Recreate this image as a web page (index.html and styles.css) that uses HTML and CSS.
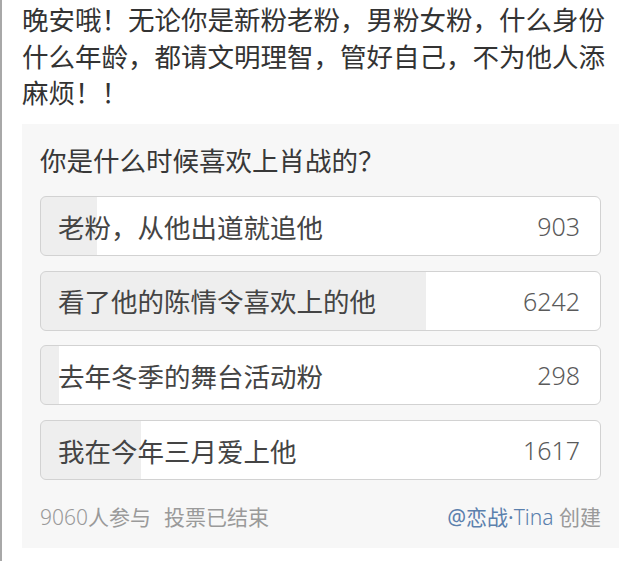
FILE: index.html
```html
<!DOCTYPE html>
<html lang="zh-CN">

<head>
    <meta charset="UTF-8">
    <meta name="viewport" content="width=device-width, initial-scale=1.0">
    <title>投票</title>
    <link rel="stylesheet" href="styles.css">
</head>

<body>
    <div class="page">
        <p class="intro">晚安哦！无论你是新粉老粉，男粉女粉，什么身份什么年龄，都请文明理智，管好自己，不为他人添麻烦！！</p>

        <div class="poll">
            <h3 class="poll-title">你是什么时候喜欢上肖战的？</h3>

            <div class="options">
                <div class="option" style="--p: 9.97%">
                    <span class="option-text">老粉，从他出道就追他</span>
                    <span class="option-count">903</span>
                </div>
                <div class="option" style="--p: 68.9%">
                    <span class="option-text">看了他的陈情令喜欢上的他</span>
                    <span class="option-count">6242</span>
                </div>
                <div class="option" style="--p: 3.29%">
                    <span class="option-text">去年冬季的舞台活动粉</span>
                    <span class="option-count">298</span>
                </div>
                <div class="option" style="--p: 17.85%">
                    <span class="option-text">我在今年三月爱上他</span>
                    <span class="option-count">1617</span>
                </div>
            </div>

            <div class="poll-footer">
                <span><span class="num">9060</span>人参与<span class="status">投票已结束</span></span>
                <span><a href="#" class="author">@恋战·<span class="num">Tina</span></a> 创建</span>
            </div>
        </div>
    </div>
</body>

</html>
```

FILE: styles.css
```css
* {
    margin: 0;
    padding: 0;
    box-sizing: border-box;
}

body {
    background: #fff;
    font-family: "Noto Sans", "Noto Sans CJK SC", sans-serif;
    color: #333;
}

.page {
    min-height: 561px;
    border-left: 2px solid #a8a8a8;
    padding: 2px 21px 13px 20px;
}

.intro {
    font-size: 26.5px;
    line-height: 36.5px;
    color: #333;
}

.poll {
    margin-top: 12.5px;
    background: #f7f7f7;
    padding: 19px 18px 15.6px;
}

.poll-title {
    font-size: 26.5px;
    font-weight: normal;
    line-height: 37px;
    color: #383838;
}

.options {
    margin-top: 16px;
    display: flex;
    flex-direction: column;
    gap: 14.7px;
}

.option {
    height: 60px;
    border: 1px solid #d2d2d2;
    border-radius: 6px;
    background: linear-gradient(to right, #eeeeee var(--p), #fff var(--p));
    display: flex;
    align-items: center;
    justify-content: space-between;
    padding: 0 20px 0 17px;
}

.option-text {
    font-size: 26.5px;
    color: #444;
}

.option-count {
    font-size: 25px;
    font-weight: 300;
    color: #5a5a5a;
}

.poll-footer {
    margin-top: 22.4px;
    display: flex;
    justify-content: space-between;
    font-size: 21px;
    line-height: 30px;
    color: #9a9a9a;
}

.num {
    font-weight: 300;
}

.status {
    margin-left: 13px;
}

.author {
    color: #5b80ad;
    text-decoration: none;
}
```
